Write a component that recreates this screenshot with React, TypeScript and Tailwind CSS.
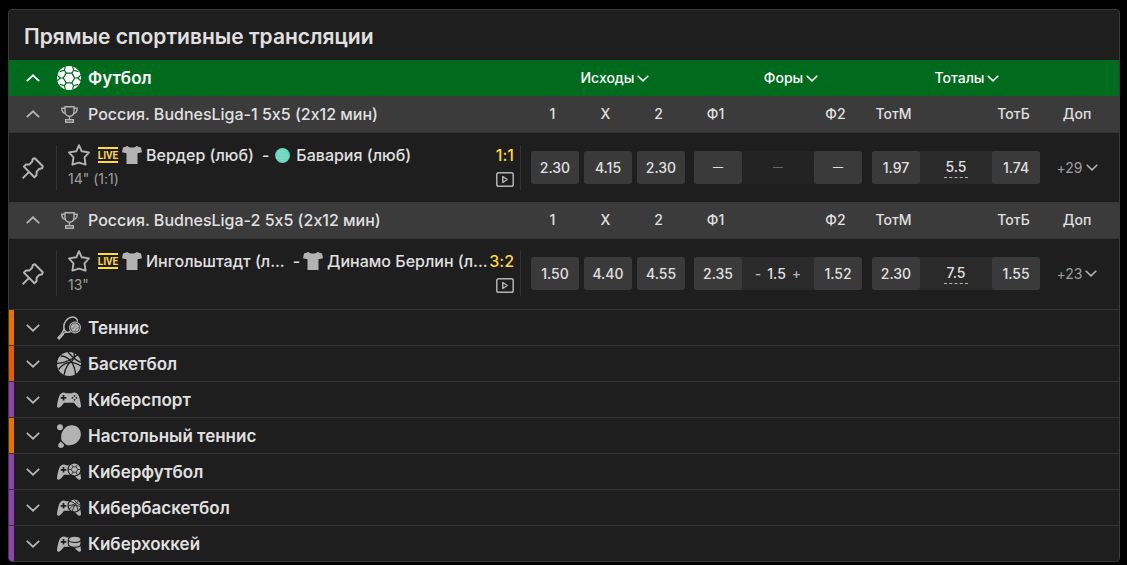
import { ReactNode, SVGProps, useState } from "react";

type IconProps = SVGProps<SVGSVGElement>;

type Team = { name: string; logo: "shirt" | "ball" };

type Match = {
  id: number;
  home: Team;
  away: Team;
  time: string;
  score: string;
  outcomes: string[];
  handicap: { first: string; value: string | null; second: string };
  total: { under: string; value: string; over: string };
  extra: string;
};

type League = { name: string; matches: Match[] };

type Sport = {
  name: string;
  icon: (props: IconProps) => ReactNode;
  bar: string;
};

function classNames(...classes: string[]) {
  return classes.filter(Boolean).join(" ");
}

/* ---------- icons ---------- */

const ChevronUp = (props: IconProps) => (
  <svg width="14" height="8" viewBox="0 0 14 8" fill="none" stroke="currentColor" strokeWidth="1.8" aria-hidden="true" {...props}>
    <path d="M.8 7.2 7 1.3l6.2 5.9" />
  </svg>
);

const ChevronDown = (props: IconProps) => (
  <svg width="14" height="8" viewBox="0 0 14 8" fill="none" stroke="currentColor" strokeWidth="1.8" aria-hidden="true" {...props}>
    <path d="M.8.8 7 6.7 13.2.8" />
  </svg>
);

const FootballIcon = (props: IconProps) => (
  <svg width="24" height="24" viewBox="0 0 24 24" aria-hidden="true" {...props}>
    <circle cx="12" cy="12" r="12" fill="currentColor" />
    <g fill="none" stroke="#006b1d" strokeWidth="1.2">
      <path d="M9.2 7.2h5.6l2.9 4.8-2.9 4.8H9.2L6.3 12z" />
      <path d="M9.2 7.2 7.4 4.3M14.8 7.2l1.8-2.9M17.7 12h3.1M14.8 16.8l1.8 2.9M9.2 16.8l-1.8 2.9M6.3 12H3.2" />
      <path d="M8.4.3 7.4 4.3 2.6 5.6M15.6.3l1 4 4.8 1.3M23.7 9.3 20.8 12l2.900 2.700M15.600 23.700l1-4 4.800-1.300M8.400 23.700l-1-4-4.800-1.300M.3 9.300 3.200 12 .3 14.700" />
    </g>
  </svg>
);

const TrophyIcon = (props: IconProps) => (
  <svg width="17" height="17" viewBox="0 0 17 17" fill="none" stroke="currentColor" strokeWidth="1.4" aria-hidden="true" {...props}>
    <path d="M4 .8h9v4.4c0 3-1.9 5-4.5 5S4 8.2 4 5.2z" />
    <path d="M4 2.3H.8c0 3 1.3 4.9 4 5.3M13 2.3h3.2c0 3-1.3 4.9-4 5.3M8.5 10.2v3.3M4.7 16.2v-2.4h7.6v2.4z" />
  </svg>
);

const PinIcon = (props: IconProps) => (
  <svg width="22" height="22" viewBox="0 0 22 22" fill="none" stroke="currentColor" strokeWidth="2" strokeLinejoin="round" aria-hidden="true" {...props}>
    <path d="M12.8 1.2 20.8 9.2 20 11.3 17.2 12 14.7 14.6 14.5 18.3 12.4 20.2 1.9 9.6 3.8 7.6 7.5 7.4 10.1 4.8 10.8 2z" />
    <path d="M7.1 14.9.7 21.3" />
  </svg>
);

const StarIcon = (props: IconProps) => (
  <svg width="22" height="22" viewBox="0 0 22 22" fill="none" stroke="currentColor" strokeWidth="1.9" strokeLinejoin="round" aria-hidden="true" {...props}>
    <path d="M11 1.2 13.7 7.3 21 8.4 16.5 13.3 17.6 20.7 11 18.6 4.4 20.7 5.5 13.3 1 8.4 8.3 7.3z" />
  </svg>
);

const ShirtIcon = (props: IconProps) => (
  <svg width="20" height="18" viewBox="0 0 20 18" fill="currentColor" aria-hidden="true" {...props}>
    <path d="M5.500 0C7 2 13 2 14.500 0L19 1.400 20 6.200 15.500 7.300V18h-11V7.300L0 6.200 1 1.400z" />
  </svg>
);

const BallLogo = (props: IconProps) => (
  <svg width="15" height="15" viewBox="0 0 15 15" aria-hidden="true" {...props}>
    <circle cx="7.5" cy="7.5" r="7.4" fill="#5fdcc6" />
    <g fill="none" stroke="#c5c4b4" strokeWidth=".9">
      <path d="M3.5 4.5 5 3l1.5 1.5L8 3l1.5 1.5L11 3.300M2.500 7.500 4 6l2 2 2-2 2 2 2.500-2M3 10.500 4.500 9l2 2 2-2 2 2L12 9.500M5.500 13l2-1 2 1" />
    </g>
  </svg>
);

const VideoIcon = (props: IconProps) => (
  <svg width="18" height="15" viewBox="0 0 18 15" fill="none" stroke="currentColor" strokeWidth="1.5" strokeLinejoin="round" aria-hidden="true" {...props}>
    <rect x=".8" y=".8" width="16.4" height="13.4" rx="1.8" />
    <path d="M6.8 4.500v6l4.400-3z" />
  </svg>
);

const TennisIcon = (props: IconProps) => (
  <svg width="24" height="24" viewBox="0 0 24 24" aria-hidden="true" {...props}>
    <g fill="none" stroke="currentColor">
      <path d="M9.7 16.2C6.3 14.6 6 9.2 8.3 5.6 10.6 1.5 15.6-.2 18.8 2.2c1.1.8 1.6 2 1.7 3.3M6.900 12.500c-.2 2-1 3.300-2 4.600M9.500 16.100c1.700.4 3.300-.1 4.400-.7M9.500 16.100c-1.500.3-2.700.9-3.700 1.800" strokeWidth="1.5" />
      <path d="M1 23 6 17.5" strokeWidth="3.2" />
    </g>
    <circle cx="18" cy="11.5" r="5.4" fill="none" stroke="currentColor" strokeWidth="1.2" />
    <circle cx="18" cy="11.5" r="4.2" fill="currentColor" />
    <path d="M14.5 12.500c2 .3 3.600-1 3.700-4M18 15.500c.2-2 1.500-3.600 3.900-3.800" fill="none" stroke="#1e1e1e" strokeWidth=".4" />
  </svg>
);

const BasketballIcon = (props: IconProps) => (
  <svg width="24" height="24" viewBox="0 0 24 24" aria-hidden="true" {...props}>
    <circle cx="12" cy="12" r="12" fill="currentColor" />
    <g fill="none" stroke="#1e1e1e" strokeWidth="1.3">
      <path d="M0 11.500C8 11 17 7 20.500 2.500M3.500 4C12 4 18 12 18.500 22.500M11 0c5 6 8 9 13.500 10.500M1.500 17.500C7 10 14 7.500 24 14M7 23.500C8 15 12.500 10 15.500 8.700 17.500 6 17.500 3 17 .5" />
    </g>
  </svg>
);

const PadBody = () => (
  <path d="M5.500 4.800c1.300-.5 2.500-.4 3.500.5h6c1-.9 2.200-1 3.500-.5 2.300.7 3.300 2.600 4 5.400.7 2.600 1.300 5.500 1.500 7.700.1 1.800-1.900 2.200-3.200 1.200-1.600-1.300-2.500-3-4-4.300H7.200c-1.500 1.300-2.400 3-4 4.300-1.300 1-3.300.6-3.200-1.200.2-2.200.8-5.100 1.500-7.700.7-2.800 1.700-4.700 4-5.400z" fill="currentColor" />
);

const PadCross = () => <path d="M6.5 7v5.600M3.700 9.800h5.600" stroke="#1e1e1e" strokeWidth="1.7" />;

const GamepadIcon = (props: IconProps) => (
  <svg width="24" height="24" viewBox="0 0 24 24" aria-hidden="true" {...props}>
    <PadBody />
    <PadCross />
    <g fill="#1e1e1e">
      <circle cx="17.5" cy="7.8" r=".9" />
      <circle cx="17.5" cy="11.8" r=".9" />
      <circle cx="15.5" cy="9.8" r=".9" />
      <circle cx="19.5" cy="9.8" r=".9" />
    </g>
  </svg>
);

const TableTennisIcon = (props: IconProps) => (
  <svg width="24" height="24" viewBox="0 0 24 24" fill="currentColor" aria-hidden="true" {...props}>
    <circle cx="3" cy="3.2" r="3" />
    <path d="M7.500 4.500C11 .5 17.500.2 21 3.500c3.800 3.700 3.800 9.400.2 13.500-2.800 3.300-6.400 4.700-10.200 4.300-1.200-.1-2.600-1-3.600-2.100-1.200-1.200-2.700-2-3-3.500C3.600 11.500 4.500 8 7.500 4.500z" />
    <path d="M3.600 17.400 6.900 20.400c.6 2-1 3.600-3.300 3.600-2.400-.2-3-2.600-1.900-4.300z" />
  </svg>
);

const CyberFootballIcon = (props: IconProps) => (
  <svg width="24" height="24" viewBox="0 0 24 24" aria-hidden="true" {...props}>
    <PadBody />
    <PadCross />
    <circle cx="17.5" cy="9.5" r="6.5" fill="currentColor" stroke="#1e1e1e" strokeWidth="1.2" />
    <g fill="none" stroke="#1e1e1e" strokeWidth=".8">
      <path d="M15.8 6.8h3.400l1.600 2.700-1.600 2.700h-3.400l-1.600-2.700zM15.800 6.800l-1-2M19.200 6.800l1-2M20.800 9.500H23.500M19.200 12.200l1 2.300M15.800 12.200l-1 2.300M14.200 9.500h-2.700" />
    </g>
  </svg>
);

const CyberBasketballIcon = (props: IconProps) => (
  <svg width="24" height="24" viewBox="0 0 24 24" aria-hidden="true" {...props}>
    <PadBody />
    <PadCross />
    <circle cx="17.5" cy="9.5" r="6.5" fill="currentColor" stroke="#1e1e1e" strokeWidth="1.2" />
    <g fill="none" stroke="#1e1e1e" strokeWidth=".9">
      <path d="M11.500 9.500c4 0 8-2 10.300-5M13 5.500c4 0 7.500 4 8 9.500M17 3.500c2 3 4 4.500 6.500 5.500M12.500 13c2.500-3.500 6-5 11.300-2M15.500 15.500c.5-4 2.500-6.500 4-7.200" />
    </g>
  </svg>
);

const CyberHockeyIcon = (props: IconProps) => (
  <svg width="24" height="24" viewBox="0 0 24 24" aria-hidden="true" {...props}>
    <PadBody />
    <PadCross />
    <path d="M11.300 7.500c0-4.600 12.700-4.600 12.700 0v4.200c0 4.700-12.700 4.700-12.700 0z" fill="currentColor" stroke="#1e1e1e" strokeWidth="1.2" />
    <path d="M11.500 8.300c1.500 2.900 10.800 2.900 12.300 0" fill="none" stroke="#1e1e1e" strokeWidth="1.1" />
  </svg>
);

/* ---------- data ---------- */

const markets = ["Исходы", "Форы", "Тоталы"];

const leagues: League[] = [
  {
    name: "Россия. BudnesLiga-1 5x5 (2x12 мин)",
    matches: [
      {
        id: 1,
        home: { name: "Вердер (люб)", logo: "shirt" },
        away: { name: "Бавария (люб)", logo: "ball" },
        time: '14" (1:1)',
        score: "1:1",
        outcomes: ["2.30", "4.15", "2.30"],
        handicap: { first: "—", value: null, second: "—" },
        total: { under: "1.97", value: "5.5", over: "1.74" },
        extra: "+29",
      },
    ],
  },
  {
    name: "Россия. BudnesLiga-2 5x5 (2x12 мин)",
    matches: [
      {
        id: 2,
        home: { name: "Ингольштадт (л...", logo: "shirt" },
        away: { name: "Динамо Берлин (л...", logo: "shirt" },
        time: '13"',
        score: "3:2",
        outcomes: ["1.50", "4.40", "4.55"],
        handicap: { first: "2.35", value: "1.5", second: "1.52" },
        total: { under: "2.30", value: "7.5", over: "1.55" },
        extra: "+23",
      },
    ],
  },
];

const sports: Sport[] = [
  { name: "Теннис", icon: TennisIcon, bar: "bg-[#e67300]" },
  { name: "Баскетбол", icon: BasketballIcon, bar: "bg-[#e65c00]" },
  { name: "Киберспорт", icon: GamepadIcon, bar: "bg-[#8e44ad]" },
  { name: "Настольный теннис", icon: TableTennisIcon, bar: "bg-[#e67300]" },
  { name: "Киберфутбол", icon: CyberFootballIcon, bar: "bg-[#8e44ad]" },
  { name: "Кибербаскетбол", icon: CyberBasketballIcon, bar: "bg-[#8e44ad]" },
  { name: "Киберхоккей", icon: CyberHockeyIcon, bar: "bg-[#8e44ad]" },
];

/* ---------- parts ---------- */

function OddButton({ value }: { value: string }) {
  return (
    <button
      type="button"
      disabled={value === "—"}
      className="h-[33px] w-12 shrink-0 rounded-[3px] bg-[#3a3a3a] text-center disabled:text-[10px]"
    >
      {value}
    </button>
  );
}

function TeamLabel({ team }: { team: Team }) {
  return (
    <span className="flex min-w-0 items-center gap-1">
      <span className="flex w-5 shrink-0 justify-center">
        {team.logo === "shirt" ? <ShirtIcon className="text-[#b3b3b3]" /> : <BallLogo />}
      </span>
      <span className="truncate">{team.name}</span>
    </span>
  );
}

function LeagueHeader({ name, open, onToggle }: { name: string; open: boolean; onToggle: () => void }) {
  const Chevron = open ? ChevronUp : ChevronDown;
  return (
    <div className="flex h-[37px] items-center border-b border-[#333333] bg-[#3b3b3b] text-sm font-medium">
      <button type="button" aria-expanded={open} onClick={onToggle} className="flex h-full min-w-0 flex-1 items-center text-left text-base">
        <span className="flex w-12 shrink-0 justify-center">
          <Chevron className="text-[#b3b3b3]" />
        </span>
        <span className="mr-[7px] flex w-6 shrink-0 justify-center">
          <TrophyIcon className="text-[#b3b3b3]" />
        </span>
        <span className="truncate">{name}</span>
      </button>
      <div className="flex shrink-0 text-center">
        <div className="flex w-[163px] gap-[5px]">
          <span className="w-12 pr-[5px]">1</span>
          <span className="w-12 pr-[5px]">X</span>
          <span className="w-12 pr-[5px]">2</span>
        </div>
        <div className="flex w-[178px]">
          <span className="w-12 pr-[5px]">Ф1</span>
          <span className="ml-[72px] w-12 pr-[5px]">Ф2</span>
        </div>
        <div className="flex w-[168px]">
          <span className="w-12 pr-[5px]">ТотМ</span>
          <span className="ml-[72px] w-12 pr-[5px]">ТотБ</span>
        </div>
        <span className="w-[79px] pr-[5px]">Доп</span>
      </div>
    </div>
  );
}

function MatchRow({ match }: { match: Match }) {
  const { home, away, handicap, total } = match;
  return (
    <div className="flex h-[69px] items-center">
      <button type="button" aria-label="Закрепить" className="flex h-full w-[47px] shrink-0 items-center justify-center text-[#b3b3b3]">
        <PinIcon />
      </button>
      <div className="mr-2.5 flex h-[45px] min-w-0 flex-1 border-x border-[#333333] pr-1.5 pl-[11px]">
        <div className="min-w-0 flex-1">
          <div className="flex h-5 items-center text-base font-medium">
            <button type="button" aria-label="В избранное" className="mr-2 shrink-0 text-[#b3b3b3]">
              <StarIcon />
            </button>
            <span className="mr-1 flex h-4 w-5 shrink-0 items-center justify-center border-y-2 border-[#ffd740] font-['Roboto',sans-serif] text-[10px] font-bold text-[#ffd740]">
              LIVE
            </span>
            <a href="#" className="flex min-w-0 items-center">
              <TeamLabel team={home} />
              <span className="mr-[3px] ml-2 shrink-0">-</span>
              <TeamLabel team={away} />
            </a>
          </div>
          <div className="mt-1 text-sm leading-5 text-[#9e9e9e]">{match.time}</div>
        </div>
        <div className="flex shrink-0 flex-col items-end">
          <span className="text-base leading-5 font-medium text-[#ffd740]">{match.score}</span>
          <button type="button" aria-label="Видео" className="mt-[7px] text-[#b3b3b3]">
            <VideoIcon />
          </button>
        </div>
      </div>
      <div className="flex shrink-0 items-center text-sm font-medium">
        <div className="flex w-[163px] gap-[5px]">
          {match.outcomes.map((value, i) => (
            <OddButton key={i} value={value} />
          ))}
        </div>
        <div className={classNames("mr-2.5 flex w-[168px] items-center rounded-[3px]", handicap.value ? "bg-[#2a2a2a]" : "bg-[#232323]")}>
          <OddButton value={handicap.first} />
          <span className="flex flex-1 items-center justify-center gap-1.5">
            {handicap.value ? (
              <>
                <button type="button" className="text-[#b3b3b3]">-</button>
                {handicap.value}
                <button type="button" className="text-[#b3b3b3]">+</button>
              </>
            ) : (
              <span className="text-[10px] text-[#666666]">—</span>
            )}
          </span>
          <OddButton value={handicap.second} />
        </div>
        <div className="flex w-[168px] items-center rounded-[3px] bg-[#2a2a2a]">
          <OddButton value={total.under} />
          <span className="flex flex-1 justify-center">
            <button type="button" className="w-6 border-b border-dashed border-[#b3b3b3] leading-5">
              {total.value}
            </button>
          </span>
          <OddButton value={total.over} />
        </div>
        <button type="button" className="flex w-[79px] items-center justify-center gap-[3px] pr-[5px] font-normal text-[#9e9e9e]">
          {match.extra}
          <ChevronDown width={12} height={7} className="text-[#b3b3b3]" />
        </button>
      </div>
    </div>
  );
}

function LeagueBlock({ league }: { league: League }) {
  const [open, setOpen] = useState(true);
  return (
    <section>
      <LeagueHeader name={league.name} open={open} onToggle={() => setOpen(!open)} />
      {open && league.matches.map((match) => <MatchRow key={match.id} match={match} />)}
    </section>
  );
}

function SportRow({ sport }: { sport: Sport }) {
  return (
    <div className="flex h-9 border-t border-[#333333]">
      <div className={classNames("w-[5px] shrink-0", sport.bar)} />
      <button type="button" aria-expanded="false" className="flex flex-1 items-center text-left text-[17px] leading-6 font-semibold">
        <span className="flex w-[43px] shrink-0 pl-3">
          <ChevronDown className="text-[#b3b3b3]" />
        </span>
        <sport.icon className="mr-[7px] shrink-0 text-[#b3b3b3]" />
        {sport.name}
      </button>
    </div>
  );
}

export default function App() {
  const [open, setOpen] = useState(true);
  const Chevron = open ? ChevronUp : ChevronDown;

  return (
    <div className="min-h-screen bg-black pt-[9px] pr-[7px] pl-2 font-['Inter','Liberation_Sans',sans-serif] text-[#e0e0e0] [font-feature-settings:'calt'_0]">
      <main className="overflow-hidden rounded-[4px] border border-[#3a3a3a] bg-[#1e1e1e]">
        <h1 className="px-[15px] pt-3 pb-2 text-[21px] leading-[30px] font-semibold">Прямые спортивные трансляции</h1>

        <section className="pb-px">
          <div className="flex h-9 items-center bg-[#006b1d] text-white">
            <button type="button" aria-expanded={open} onClick={() => setOpen(!open)} className="flex h-full flex-1 items-center text-left text-[17px] leading-6 font-semibold">
              <span className="flex w-12 shrink-0 justify-center">
                <Chevron />
              </span>
              <FootballIcon className="mr-[7px] shrink-0" />
              Футбол
            </button>
            <div className="mr-16 flex text-sm font-medium">
              {markets.map((market) => (
                <button key={market} type="button" className="flex w-[176px] items-center justify-center gap-[3px]">
                  {market}
                  <ChevronDown width={12} height={7} />
                </button>
              ))}
            </div>
          </div>
          {open && leagues.map((league) => <LeagueBlock key={league.name} league={league} />)}
        </section>

        {sports.map((sport) => (
          <SportRow key={sport.name} sport={sport} />
        ))}
      </main>
    </div>
  );
}
